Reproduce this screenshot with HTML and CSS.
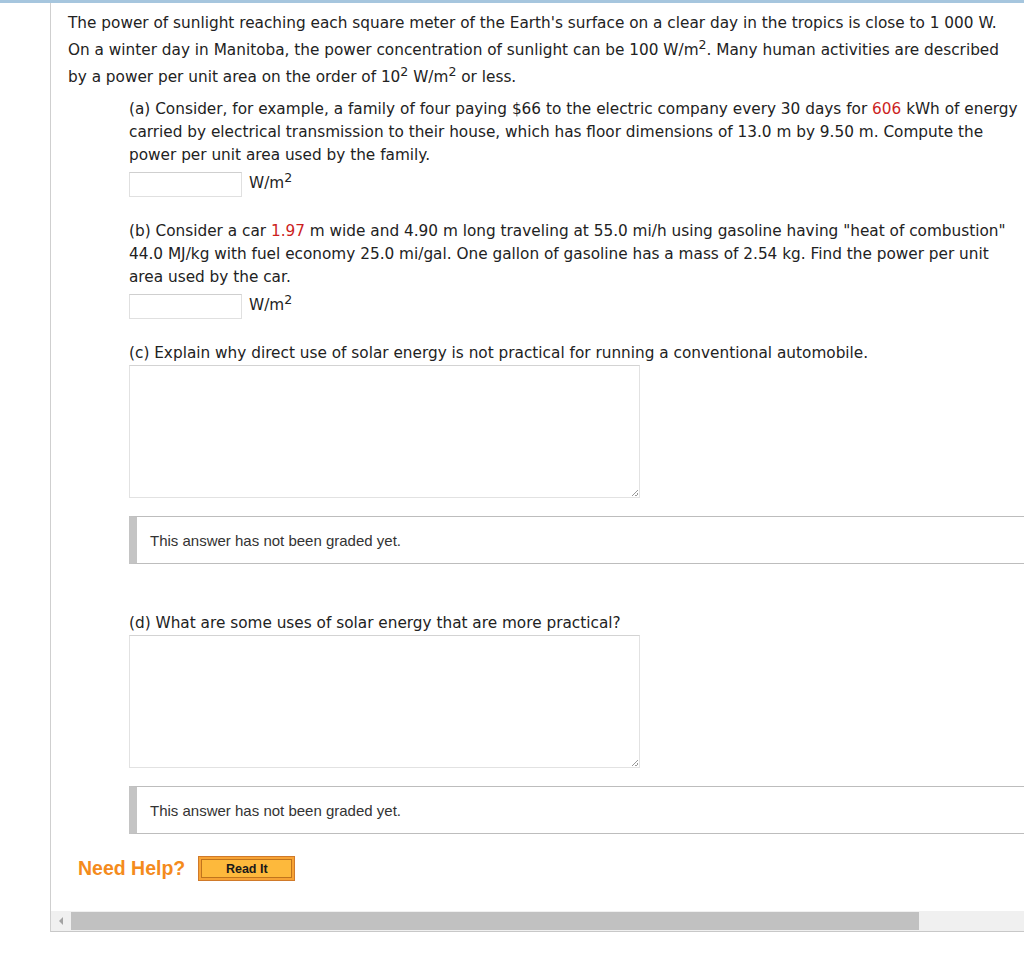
FILE: index.html
```html
<!DOCTYPE html>
<html>
<head>
<meta charset="utf-8">
<link rel="stylesheet" href="styles.css">
</head>
<body>
<div class="topbar"></div>
<div class="frame">
  <div class="content">
    <p class="intro">The power of sunlight reaching each square meter of the Earth's surface on a clear day in the tropics is close to 1 000 W.<br>On a winter day in Manitoba, the power concentration of sunlight can be 100 W/m<sup>2</sup>. Many human activities are described<br>by a power per unit area on the order of 10<sup>2</sup> W/m<sup>2</sup> or less.</p>
    <div class="parts">
      <div class="part">
        <p class="ptext">(a) Consider, for example, a family of four paying $66 to the electric company every 30 days for <span class="red">606</span> kWh of energy<br>carried by electrical transmission to their house, which has floor dimensions of 13.0 m by 9.50 m. Compute the<br>power per unit area used by the family.</p>
        <div class="answer"><span class="input"></span><span class="unit">W/m<sup>2</sup></span></div>
      </div>
      <div class="part">
        <p class="ptext">(b) Consider a car <span class="red">1.97</span> m wide and 4.90 m long traveling at 55.0 mi/h using gasoline having "heat of combustion"<br>44.0 MJ/kg with fuel economy 25.0 mi/gal. One gallon of gasoline has a mass of 2.54 kg. Find the power per unit<br>area used by the car.</p>
        <div class="answer"><span class="input"></span><span class="unit">W/m<sup>2</sup></span></div>
      </div>
      <div class="part">
        <p class="ptext">(c) Explain why direct use of solar energy is not practical for running a conventional automobile.</p>
        <div class="textarea"><span class="grip"></span></div>
        <div class="graded">This answer has not been graded yet.</div>
      </div>
      <div class="part part-d">
        <p class="ptext">(d) What are some uses of solar energy that are more practical?</p>
        <div class="textarea"><span class="grip"></span></div>
        <div class="graded">This answer has not been graded yet.</div>
      </div>
    </div>
    <div class="help">
      <span class="needhelp">Need Help?</span>
      <span class="readit"><span class="readit-inner">Read It</span></span>
    </div>
  </div>
  <div class="hscroll">
    <div class="arrow"><span class="tri"></span></div>
    <div class="thumb"></div>
    <div class="track"></div>
  </div>
</div>
</body>
</html>
```
FILE: styles.css
```css
html, body {
  margin: 0;
  padding: 0;
  background: #fff;
}
body {
  font-family: "DejaVu Sans", Verdana, sans-serif;
  color: #222;
  font-size: 15.3px;
}
.topbar {
  height: 3px;
  background: #a6c6de;
}
.frame {
  margin-left: 50px;
  border-left: 1px solid #cfcfcf;
  border-bottom: 1px solid #c8c8c8;
  overflow: hidden;
}
.content {
  padding: 7px 0 0 17px;
}
sup {
  font-size: 0.82em;
  line-height: 0;
  vertical-align: 0.45em;
}
.intro {
  margin: 0;
  line-height: 27px;
  white-space: nowrap;
}
.parts {
  margin-left: 61px;
  margin-top: 7px;
}
.part {
  margin-bottom: 23px;
}
.part-d {
  margin-top: 48px;
}
.ptext {
  margin: 0;
  line-height: 23px;
  white-space: nowrap;
}
.red {
  color: #cc1f1f;
}
.answer {
  display: flex;
  align-items: center;
  margin-top: 5px;
  height: 25px;
}
.input {
  display: inline-block;
  width: 111px;
  height: 23px;
  border: 1px solid #e0e0e0;
  border-top-color: #cfcfcf;
  background: #fff;
}
.unit {
  margin-left: 7px;
  margin-top: -4px;
}
.textarea {
  position: relative;
  width: 509px;
  height: 131px;
  border: 1px solid #e2e2e2;
  border-top-color: #d3d3d3;
}
.grip {
  position: absolute;
  right: 1px;
  bottom: 1px;
  width: 6px;
  height: 6px;
  background: linear-gradient(135deg, transparent 45%, #999 45%, #999 55%, transparent 55%, transparent 75%, #999 75%, #999 85%, transparent 85%);
}
.graded {
  margin-top: 18px;
  margin-right: -60px;
  height: 46px;
  border-top: 1px solid #bdbdbd;
  border-bottom: 1px solid #bdbdbd;
  border-left: 8px solid #c4c4c4;
  padding-left: 13px;
  display: flex;
  align-items: center;
  font-family: "Liberation Sans", Arial, sans-serif;
  font-size: 15px;
  color: #333;
}
.help {
  display: flex;
  align-items: center;
  margin-left: 10px;
  margin-top: -1px;
  height: 25px;
  margin-bottom: 30px;
}
.needhelp {
  font-family: "Liberation Sans", Arial, sans-serif;
  font-weight: bold;
  font-size: 19.5px;
  color: #f48b1c;
}
.readit {
  margin-left: 13px;
  display: inline-block;
  width: 97px;
  height: 25px;
  border: 1px solid #d07a2a;
  background: #f7a335;
  padding: 2px;
  box-sizing: border-box;
}
.readit-inner {
  display: flex;
  align-items: center;
  justify-content: center;
  height: 100%;
  border: 1px solid #c0741c;
  background: #fdb93c;
  box-sizing: border-box;
  font-family: "Liberation Sans", Arial, sans-serif;
  font-weight: bold;
  font-size: 12.5px;
  color: #1a1a1a;
}
.hscroll {
  display: flex;
  height: 20px;
  background: #f0f0f0;
}
.arrow {
  width: 20px;
  display: flex;
  align-items: center;
  justify-content: center;
}
.tri {
  width: 0;
  height: 0;
  border-top: 4px solid transparent;
  border-bottom: 4px solid transparent;
  border-right: 4px solid #a3a3a3;
}
.thumb {
  width: 848px;
  margin: 1px 0;
  background: #c1c1c1;
}
.track {
  flex: 1;
}
```
